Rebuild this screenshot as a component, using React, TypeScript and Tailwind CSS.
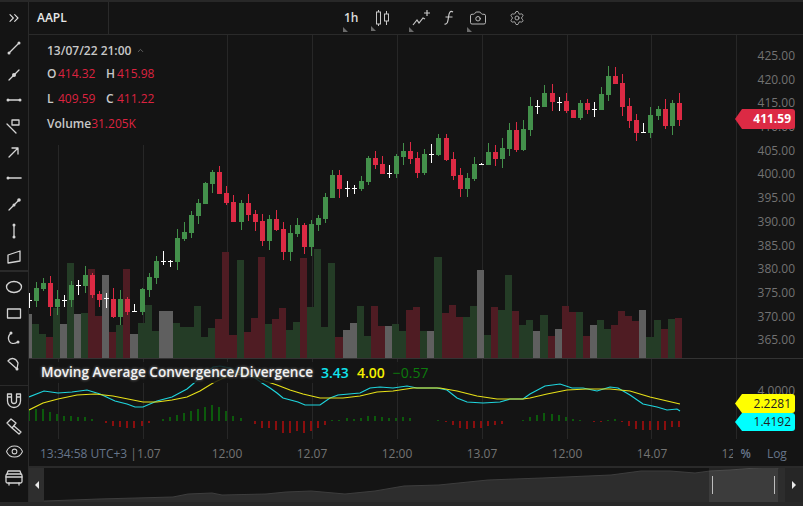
import { Camera, ChevronsRight, ChevronUp, Eye, Settings } from "lucide-react";

type Kind = "g" | "r" | "d";
// kind, wick top, wick bottom, body top, body bottom, volume top, macd histogram end
type Row = [Kind, number, number, number, number, number, number];

const rows: Row[] = [
  ["d", 293, 308, 300, 300, 314, 410],
  ["g", 282, 307, 288, 301, 324, 409],
  ["g", 278, 291, 283, 289, 334, 409],
  ["r", 276, 316, 283, 307, 337, 412],
  ["g", 290, 315, 299, 307, 308, 414],
  ["d", 295, 307, 300, 300, 324, 416],
  ["g", 281, 307, 285, 300, 263, 416],
  ["d", 280, 295, 285, 285, 314, 417],
  ["g", 266, 293, 275, 286, 313, 417],
  ["r", 273, 298, 275, 295, 269, 419],
  ["r", 291, 307, 294, 300, 316, 421],
  ["d", 293, 308, 298, 298, 275, 423],
  ["r", 288, 318, 299, 317, 332, 426],
  ["g", 290, 325, 299, 317, 325, 427],
  ["r", 297, 315, 299, 312, 269, 428],
  ["d", 304, 312, 311, 311, 334, 428],
  ["g", 288, 315, 289, 312, 323, 426],
  ["g", 273, 297, 277, 290, 305, 423],
  ["g", 256, 284, 261, 278, 331, 421],
  ["d", 251, 265, 261, 261, 311, 419],
  ["d", 260, 267, 261, 261, 311, 417],
  ["g", 229, 270, 238, 262, 323, 415],
  ["g", 222, 241, 232, 239, 327, 413],
  ["g", 211, 238, 215, 233, 327, 411],
  ["g", 199, 224, 203, 216, 306, 409],
  ["g", 182, 204, 183, 204, 337, 407],
  ["g", 170, 193, 172, 184, 328, 405],
  ["r", 166, 194, 172, 194, 319, 407],
  ["r", 186, 205, 193, 203, 252, 411],
  ["r", 195, 222, 202, 222, 335, 416],
  ["g", 200, 230, 203, 222, 260, 418],
  ["r", 194, 221, 203, 215, 332, 421],
  ["r", 210, 231, 214, 222, 318, 424],
  ["r", 214, 246, 221, 241, 257, 428],
  ["g", 215, 250, 219, 241, 324, 428],
  ["r", 210, 231, 219, 230, 319, 430],
  ["r", 222, 260, 229, 252, 308, 433],
  ["g", 225, 261, 233, 252, 330, 433],
  ["g", 218, 237, 225, 234, 322, 431],
  ["r", 223, 254, 225, 247, 258, 433],
  ["g", 220, 256, 224, 247, 307, 431],
  ["g", 215, 231, 218, 225, 249, 428],
  ["g", 193, 223, 197, 219, 327, 425],
  ["g", 170, 198, 175, 198, 263, 420],
  ["r", 170, 198, 175, 189, 337, 420],
  ["d", 181, 197, 188, 188, 330, 418],
  ["d", 185, 194, 188, 188, 323, 419],
  ["g", 176, 191, 181, 189, 306, 418],
  ["g", 156, 185, 158, 182, 336, 416],
  ["r", 151, 169, 158, 165, 306, 416],
  ["r", 156, 174, 164, 174, 326, 417],
  ["d", 165, 178, 173, 173, 326, 418],
  ["g", 154, 178, 156, 174, 324, 418],
  ["g", 143, 165, 151, 157, 331, 417],
  ["r", 142, 164, 151, 159, 310, 418],
  ["r", 152, 178, 158, 173, 307, 421],
  ["g", 149, 175, 154, 173, 331, 421],
  ["d", 144, 163, 154, 154, 331, 421],
  ["g", 134, 156, 138, 155, 257, 420],
  ["r", 134, 161, 138, 160, 313, 422],
  ["r", 152, 180, 159, 176, 305, 425],
  ["r", 168, 197, 175, 189, 317, 428],
  ["g", 173, 197, 178, 189, 317, 429],
  ["g", 157, 181, 164, 179, 306, 428],
  ["d", 163, 165, 164, 164, 270, 428],
  ["g", 143, 165, 152, 165, 335, 426],
  ["r", 145, 166, 152, 159, 307, 425],
  ["g", 138, 168, 148, 159, 310, 424],
  ["g", 123, 156, 130, 149, 275, 421],
  ["r", 122, 152, 130, 150, 311, 421],
  ["g", 120, 151, 129, 150, 325, 420],
  ["g", 97, 136, 106, 130, 320, 417],
  ["d", 100, 114, 106, 106, 331, 415],
  ["g", 85, 107, 93, 107, 315, 413],
  ["r", 84, 111, 93, 102, 336, 414],
  ["d", 97, 111, 102, 102, 329, 415],
  ["r", 93, 113, 101, 111, 306, 417],
  ["r", 110, 118, 110, 118, 312, 419],
  ["g", 100, 120, 103, 118, 312, 420],
  ["r", 99, 114, 103, 110, 336, 421],
  ["d", 102, 117, 109, 109, 325, 422],
  ["g", 87, 110, 94, 110, 320, 422],
  ["g", 66, 101, 76, 95, 329, 420],
  ["r", 67, 84, 76, 84, 325, 419],
  ["r", 74, 116, 83, 107, 311, 422],
  ["r", 98, 128, 106, 121, 316, 426],
  ["r", 114, 141, 120, 133, 321, 429],
  ["d", 123, 133, 132, 132, 310, 430],
  ["g", 107, 138, 115, 133, 337, 430],
  ["g", 106, 120, 109, 116, 320, 430],
  ["r", 99, 129, 109, 126, 329, 430],
  ["g", 100, 135, 103, 126, 319, 427],
  ["r", 93, 126, 103, 120, 318, 427],
];

const xAt = (i: number) =>
  29 + 7 * i + [16, 30, 45, 59, 74, 89].filter((j) => i >= j).length;

const candleColor = { g: "#43904b", r: "#dc2a44", d: "#ffffff" };
const volumeColor = { g: "#243c26", r: "#4f1c23", d: "#5f5f5f" };
const gridX = [58, 143, 227, 312, 397, 482, 567, 651];

const macdLine =
  "29,397 44,391 58,393 72,392 87,390 100,394 115,401 127,404 135,407 143,407 157,401 172,397 187,389 200,378 213,367 220,366 230,368 240,373 255,378 262,383 270,388 277,393 283,398 298,402 305,405 320,405 330,398 338,395 360,393 370,388 380,387 393,388 407,386 417,388 437,388 447,390 457,398 467,402 483,403 500,402 510,399 523,399 530,394 545,386 560,384 572,388 583,388 597,391 610,387 618,388 630,395 643,404 657,407 667,410 677,409 680,411";
const signalLine =
  "29,410 43,403 58,399 77,395 95,394 113,396 128,399 143,402 157,402 172,400 187,397 200,391 213,383 230,375 250,374 265,381 277,385 290,390 303,394 320,398 343,398 360,396 377,392 393,391 413,388 440,388 457,391 477,396 497,399 523,399 530,398 547,394 567,390 587,389 610,389 630,391 650,397 680,404";
const areaLine =
  "29,502 45,501 99,499 136,498 173,497 188,494 212,493 222,495 266,494 286,492 311,491 345,494 375,491 404,486 439,485 488,480 542,478 611,475 641,471 670,471 695,473 710,471 730,470 769,467 779,468";

const prices = ["425.00", "420.00", "415.00", "410.00", "405.00", "400.00", "395.00", "390.00", "385.00", "380.00", "375.00", "370.00", "365.00"];

const GridLines = ({ top, bottom }: { top: number; bottom: number }) => (
  <>
    {gridX.map((x) => (
      <rect key={x} x={x} y={top} width={1} height={bottom - top} fill="#272727" />
    ))}
  </>
);

const CandleChart = () => (
  <svg width={707} height={323} viewBox="29 35 707 323" className="block">
    <GridLines top={35} bottom={358} />
    {rows.map(([kind, , , , , vol], i) => {
      const x = xAt(i);
      const right = i < rows.length - 1 ? xAt(i + 1) - 4 : x + 3;
      return <rect key={i} x={x - 4} y={vol} width={right - x + 4} height={358 - vol} fill={volumeColor[kind]} />;
    })}
    {rows.map(([kind, wt, wb, bt, bb], i) => {
      const x = xAt(i);
      return (
        <g key={i} fill={candleColor[kind]}>
          <rect x={x} y={wt} width={1} height={wb - wt} />
          <rect x={x - 2} y={bt} width={5} height={Math.max(bb - bt, 1)} />
        </g>
      );
    })}
  </svg>
);

const MacdChart = () => (
  <svg width={707} height={80} viewBox="29 359 707 80" className="block">
    <GridLines top={359} bottom={439} />
    {rows.map((r, i) => {
      const end = r[6];
      if (end === 421) return null;
      return (
        <rect
          key={i}
          x={xAt(i) - 1}
          y={Math.min(end, 421)}
          width={2}
          height={Math.abs(end - 421)}
          fill={end < 421 ? "#0c5a0c" : "#8a0e0e"}
        />
      );
    })}
    <polyline points={macdLine} fill="none" stroke="#1fd4dc" strokeWidth={1.2} />
    <polyline points={signalLine} fill="none" stroke="#e6e018" strokeWidth={1.2} />
  </svg>
);

const Tag = ({ color, className, children }: { color: string; className: string; children: string }) => (
  <div className={`absolute left-[-2px] flex ${className}`}>
    <svg width={7} height="100%" viewBox="0 0 7 10" preserveAspectRatio="none" className="block">
      <polygon points="7,0 0,5 7,10" fill={color} />
    </svg>
    <div style={{ backgroundColor: color }} className="flex flex-1 items-center justify-end rounded-r-[3px] pr-[4px]">
      {children}
    </div>
  </div>
);

const Corner = () => (
  <svg width={5} height={5} viewBox="0 0 5 5" className="absolute bottom-[-5px] left-[-2px]">
    <polygon points="0,0 5,5 0,5" fill="#6b6b6b" />
  </svg>
);

const iconProps = {
  width: 22,
  height: 22,
  viewBox: "0 0 22 22",
  fill: "none",
  stroke: "#d4d4d4",
  strokeWidth: 1.3,
  strokeLinecap: "round" as const,
  strokeLinejoin: "round" as const,
};

const Dot = ({ cx, cy, r = 1.5 }: { cx: number; cy: number; r?: number }) => (
  <circle cx={cx} cy={cy} r={r} fill="#d4d4d4" stroke="none" />
);

const tools = [
  <svg {...iconProps}><path d="M6 16 16 6" /><Dot cx={6} cy={16} /><Dot cx={16} cy={6} /></svg>,
  <svg {...iconProps}><path d="M6 17 16 7" /><Dot cx={11} cy={12} r={2} /></svg>,
  <svg {...iconProps}><path d="M5 11h12" /><Dot cx={5} cy={11} /><Dot cx={17} cy={11} /></svg>,
  <svg {...iconProps}><path d="M4 9l9 9" /><rect x="9" y="5" width="7" height="5" /></svg>,
  <svg {...iconProps}><path d="M6 16 15 7M9 7h6v6" /></svg>,
  <svg {...iconProps}><path d="M5 11h13" strokeWidth={1.6} /><Dot cx={5} cy={11} /></svg>,
  <svg {...iconProps}><path d="M6 17 16 7" /><Dot cx={16} cy={7} r={1.8} /><Dot cx={11} cy={12} r={1.5} /></svg>,
  <svg {...iconProps}><path d="M11 6v12" /><Dot cx={11} cy={6} /><Dot cx={11} cy={18} /></svg>,
  <svg {...iconProps}><polygon points="5,10 17,6 17,16 5,18" /></svg>,
];

const shapes = [
  <svg {...iconProps}><ellipse cx="11" cy="11" rx="7.5" ry="5.5" /></svg>,
  <svg {...iconProps}><rect x="4.5" y="7" width="13" height="9" /></svg>,
  <svg {...iconProps}><path d="M8 5C3 10 6 19 15 14" /><Dot cx={8} cy={5} /><Dot cx={15} cy={14} /></svg>,
  <svg {...iconProps}><path d="M5 7C8 3 13 4 15 9l-1 6zM5 7l9 8" /><Dot cx={14} cy={15} /></svg>,
];

const extras = [
  <svg {...iconProps}><path d="M4.5 5v7a6.5 6.5 0 0 0 13 0V5h-4v7a2.5 2.5 0 0 1-5 0V5zM4.5 8h4M13.5 8h4" /></svg>,
  <svg {...iconProps}><path d="M4 8 8 4l5 4-4 5zM11 11l7 6-2 2-7-6" /></svg>,
  <Eye size={19} strokeWidth={1.3} color="#d4d4d4" className="mt-[-2px]" />,
  <svg {...iconProps}><rect x="3" y="7" width="16" height="9" rx="1.5" /><path d="M4 7 5 4h12l1 3M3 10h16M6 16v2M16 16v2" /></svg>,
];

const ToolButton = ({ children }: { children: React.ReactNode }) => (
  <div className="flex h-[26px] w-full items-center justify-center">{children}</div>
);

export default function App() {
  return (
    <div className="flex h-[506px] w-[803px] flex-col overflow-hidden bg-[#141414] font-['Open_Sans',sans-serif] text-[12px] text-[#c8c8c8]">
      <div className="h-[2px] bg-[#282828]" />
      <div className="flex min-h-0 flex-1">
        <aside className="flex w-[29px] shrink-0 flex-col items-center border-r border-[#2a2a2a]">
          <div className="flex h-[32px] w-full items-center justify-center">
            <ChevronsRight size={16} strokeWidth={1.6} color="#e0e0e0" />
          </div>
          <div className="pt-[1px]" />
          {tools.map((icon, i) => (
            <ToolButton key={i}>{icon}</ToolButton>
          ))}
          <div className="mt-[1px] h-[2px] w-full bg-[#2a2a2a]" />
          <div className="pt-[2px]" />
          {shapes.map((icon, i) => (
            <ToolButton key={i}>{icon}</ToolButton>
          ))}
          <div className="mt-[7px] h-px w-full bg-[#2a2a2a]" />
          <div className="pt-[1px]" />
          {extras.map((icon, i) => (
            <ToolButton key={i}>{icon}</ToolButton>
          ))}
        </aside>

        <main className="flex min-w-0 flex-1 flex-col">
          <header className="flex h-[33px] shrink-0 border-b border-[#2a2a2a]">
            <div className="flex w-[80px] items-center border-r border-[#2a2a2a] pl-[8px] text-[12px] font-semibold text-[#e8e8e8]">
              AAPL
            </div>
            <div className="flex items-center pl-[236px] text-[#c8c8c8]">
              <div className="relative w-[28px] text-[12px] font-semibold text-[#dcdcdc]"><Corner /><span className="ml-[-1px]">1h</span></div>
              <div className="relative w-[38px]">
                <Corner />
                <svg width={16} height={16} viewBox="0 0 16 16" fill="none" stroke="#c8c8c8" strokeWidth={1} className="ml-[2px]">
                  <path d="M3.5 0v2M3.5 14v2M11.5 1v3M11.5 11v4" />
                  <rect x="1.5" y="2" width="4" height="12" />
                  <rect x="9.5" y="4" width="4" height="7" />
                </svg>
              </div>
              <div className="relative w-[31px]">
                <Corner />
                <svg width={20} height={18} viewBox="0 0 20 18" fill="none" stroke="#c8c8c8" strokeWidth={1.2}>
                  <path d="M2 16l4-5 2 3 4-5 2 1M16 1v6M13 4h6" />
                </svg>
              </div>
              <div className="relative w-[27px]">
                <svg width={14} height={16} viewBox="0 0 14 16" fill="none" stroke="#c8c8c8" strokeWidth={1.2}>
                  <path d="M11 2C8 0 7 3 6.5 7s-1 8-4 7M3.5 7h7" />
                </svg>
              </div>
              <div className="relative w-[40px]">
                <Corner />
                <Camera size={18} strokeWidth={1.2} color="#c8c8c8" />
              </div>
              <Settings size={16} strokeWidth={1.2} color="#c8c8c8" />
            </div>
          </header>

          <section className="flex h-[323px] shrink-0">
            <div className="relative w-[707px]">
              <CandleChart />
              <div className="absolute left-[8px] top-0 h-[110px] w-[135px] bg-[#141414] pl-[10px] pt-[7px] font-semibold leading-[17px]">
                <div className="flex items-center gap-[5px]">
                  <span>13/07/22 21:00</span>
                  <ChevronUp size={9} color="#777777" />
                </div>
                <div className="mt-[6px] grid grid-cols-[11px_48px_11px_48px] gap-y-[8px] font-normal text-[#dc2340]">
                  <b className="font-semibold text-[#c8c8c8]">O</b><span>414.32</span>
                  <b className="font-semibold text-[#c8c8c8]">H</b><span>415.98</span>
                  <b className="font-semibold text-[#c8c8c8]">L</b><span>409.59</span>
                  <b className="font-semibold text-[#c8c8c8]">C</b><span>411.22</span>
                </div>
                <div className="mt-[8px] flex font-normal text-[#dc2340]">
                  <b className="font-semibold text-[#c8c8c8]">Volume</b><span>31.205K</span>
                </div>
              </div>
            </div>
            <div className="relative flex-1 border-l border-[#272727] pt-[9px] text-right text-[#727272]">
              {prices.map((p) => (
                <div key={p} className="h-[23.7px] pr-[8px] leading-[23.7px]">{p}</div>
              ))}
              <Tag color="#dc2a44" className="top-[74px] h-[20px] w-[60px] text-[12px] font-bold text-white">411.59</Tag>
            </div>
          </section>

          <div className="h-px shrink-0 bg-[#333333]" />

          <section className="flex h-[80px] shrink-0">
            <div className="relative w-[707px]">
              <MacdChart />
              <div className="absolute left-[7px] top-[3px] flex h-[21px] items-center gap-[8px] bg-[#141414]/85 pl-[5px] pr-[8px] text-[14px] font-semibold">
                <span className="text-[13.6px] text-[#f2f2f2] [text-shadow:0_0_3px_#ffffff90]">Moving Average Convergence/Divergence</span>
                <span className="text-[#11e3ee]">3.43</span>
                <span className="text-[#f4f000]">4.00</span>
                <span className="font-normal text-[#0c7a0c]">−0.57</span>
              </div>
            </div>
            <div className="relative flex-1 border-l border-[#272727] pt-[23px] text-right text-[#727272]">
              <div className="pr-[8px] leading-[17px]">4.0000</div>
              <Tag color="#ffff00" className="top-[35px] h-[19px] w-[60px] text-[#222222]">2.2281</Tag>
              <Tag color="#00ffff" className="top-[54px] h-[18px] w-[60px] text-[#222222]">1.4192</Tag>
            </div>
          </section>

          <div className="flex h-[27px] shrink-0 items-center pt-[2px] text-[#747474]">
            <div className="w-[155.5px] shrink-0 whitespace-nowrap pl-[11px]">
              <span className="text-[#66758a]">13:34:58 UTC+3</span> |1.07
            </div>
            <span className="w-[85px] text-center">12:00</span>
            <span className="w-[85px] text-center">12.07</span>
            <span className="w-[85px] text-center">12:00</span>
            <span className="w-[85px] text-center">13.07</span>
            <span className="w-[85px] text-center">12:00</span>
            <span className="w-[85px] text-center">14.07</span>
            <div className="ml-[27px] w-[11px] overflow-hidden">12</div>
            <span className="ml-[8px] font-semibold text-[#66758a]">%</span>
            <span className="ml-[16px] text-[#66758a]">Log</span>
          </div>

          <div className="flex h-[36px] shrink-0 border-t-2 border-[#2a2a2a]">
            <div className="flex w-[15px] items-center justify-center bg-[#2e2e2e]">
              <svg width={4} height={8} viewBox="0 0 4 8"><polygon points="4,0 0,4 4,8" fill="#e8e8e8" /></svg>
            </div>
            <div className="relative flex-1">
              <svg width={741} height={34} viewBox="44 468 741 34" className="block">
                <polygon points={`${areaLine} 785,468 785,502`} fill="#2d2d2d" />
                <polyline points={areaLine} fill="none" stroke="#3d3d3d" />
              </svg>
              <div className="absolute bottom-0 left-[665px] top-0 flex w-[69px] items-center justify-between bg-white/[0.07] px-[3px]">
                <div className="h-[18px] w-px bg-[#bdbdbd]" />
                <div className="h-[18px] w-px bg-[#bdbdbd]" />
              </div>
            </div>
            <div className="flex w-[18px] items-center justify-center bg-[#262626]">
              <svg width={4} height={8} viewBox="0 0 4 8"><polygon points="0,0 4,4 0,8" fill="#e8e8e8" /></svg>
            </div>
          </div>
        </main>
      </div>
      <div className="h-[4px] shrink-0 bg-[#282828]" />
    </div>
  );
}
